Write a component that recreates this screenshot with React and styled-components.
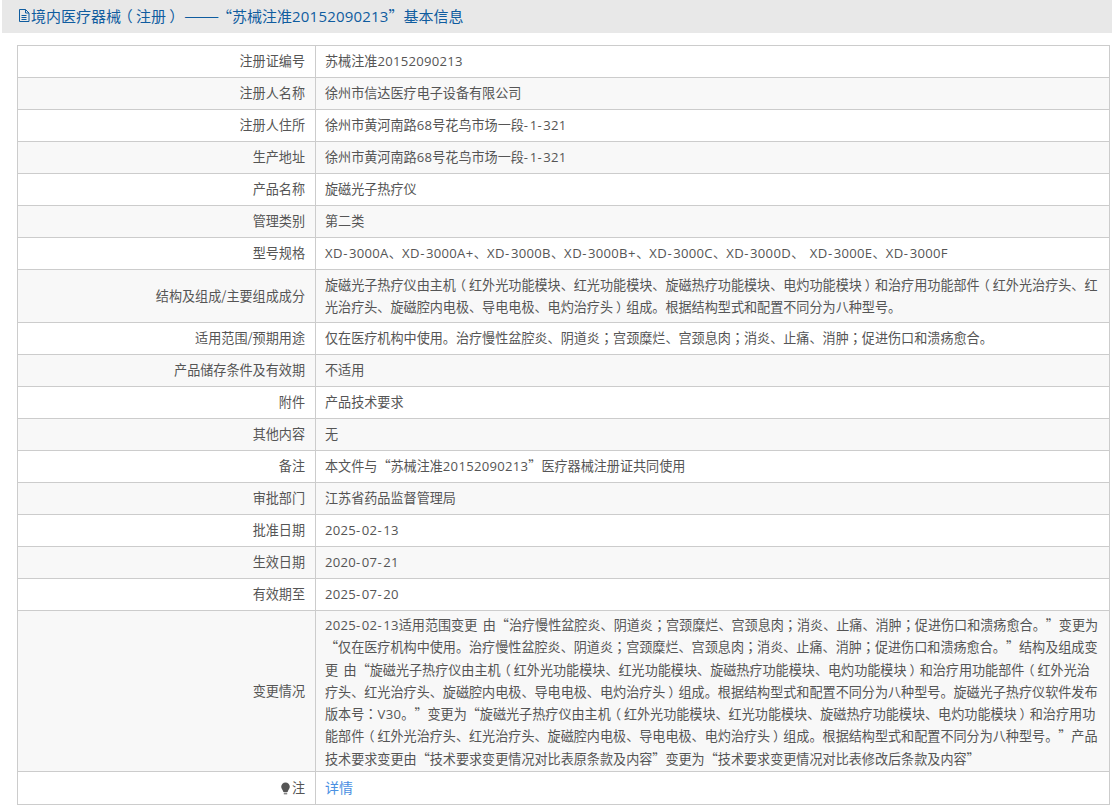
import React from "react";
import styled, { createGlobalStyle } from "styled-components";

const Global = createGlobalStyle`
  html, body { margin: 0; padding: 0; background: #fff; }
  body { font-family: "Noto Sans CJK SC", sans-serif; font-size: 13.1px; color: #555; }
`;

const Page = styled.div`
  width: 1112px;
  height: 812px;
  overflow: hidden;
  background: #fff;
`;

const Latin = styled.span`
  font-family: "Open Sans", sans-serif;
  letter-spacing: ${(p) => (p.$kind === "digit" ? "0.28px" : p.$kind === "letter" ? "0.55px" : "1.55px")};
`;

const Centered = styled.span`
  font-family: "Noto Sans CJK TC", sans-serif;
`;

const Paren = styled.span`
  display: inline-block;
  width: 1em;
  transform: translateX(${(p) => (p.$open ? "-0.22em" : "0.22em")});
`;

const Quote = styled.span`
  display: inline-block;
  width: 1em;
  text-align: ${(p) => (p.$open ? "right" : "left")};
`;

const Header = styled.h3`
  margin: 0 0 0 2px;
  box-sizing: border-box;
  height: 33px;
  padding: 0 0 2px 15px;
  background: #e8e8e8;
  color: #0f5c9f;
  font-size: 15px;
  font-weight: 400;
  line-height: 31px;
  display: flex;
  align-items: center;
  ${Latin} { letter-spacing: 0.2px; }
`;

const HeaderText = styled.span`
  display: block;
`;

const Dash = styled.span`
  display: inline-block;
  width: 33px;
  margin-left: 3px;
  white-space: nowrap;
  transform-origin: left center;
  transform: scaleX(1.4);
`;

const DocIcon = styled.svg`
  width: 14px;
  height: 15px;
  flex: none;
`;

const Table = styled.table`
  border-collapse: collapse;
  table-layout: fixed;
  width: 1093px;
  margin: 12px 0 0 17px;
`;

const Row = styled.tr`
  background: ${(p) => (p.$odd ? "#f8f8f8" : "#fff")};
`;

const Label = styled.td`
  width: 298px;
  box-sizing: border-box;
  border: 1px solid #ccc;
  padding: 4px 10px 5px 9px;
  text-align: right;
  line-height: 22px;
`;

const Value = styled.td`
  border: 1px solid #ccc;
  padding: ${(p) => (p.$double ? "4px 8px 4px 9px" : "4px 8px 5px 9px")};
  line-height: 22px;
  word-spacing: 2.5px;
`;

const MultiValue = styled(Value)`
  padding: 3px 8px 1px 9px;
  line-height: 22.3px;
`;

const Link = styled.a`
  color: #4a90e2;
  text-decoration: none;
  font-size: 14px;
`;

const BulbIcon = styled.svg`
  width: 11px;
  height: 13px;
  vertical-align: -2px;
  margin-right: 1px;
`;

const Rich = ({ text }) =>
  text.split(/([0-9]+|[A-Za-z+]+|-|[（）]|[；：]|[“”])/).map((part, i) => {
    if (!part) return null;
    if (/^[0-9]+$/.test(part)) return <Latin key={i} $kind="digit">{part}</Latin>;
    if (/^[A-Za-z+]+$/.test(part)) return <Latin key={i} $kind="letter">{part}</Latin>;
    if (part === "-") return <Latin key={i} $kind="hyphen">{part}</Latin>;
    if (part === "（" || part === "）") return <Paren key={i} $open={part === "（"}>{part}</Paren>;
    if (part === "；" || part === "：") return <Centered key={i}>{part}</Centered>;
    if (part === "“" || part === "”") return <Quote key={i} $open={part === "“"}>{part}</Quote>;
    return part;
  });

const rows = [
  ["注册证编号", "苏械注准20152090213"],
  ["注册人名称", "徐州市信达医疗电子设备有限公司"],
  ["注册人住所", "徐州市黄河南路68号花鸟市场一段-1-321"],
  ["生产地址", "徐州市黄河南路68号花鸟市场一段-1-321"],
  ["产品名称", "旋磁光子热疗仪"],
  ["管理类别", "第二类"],
  ["型号规格", "XD-3000A、XD-3000A+、XD-3000B、XD-3000B+、XD-3000C、XD-3000D、 XD-3000E、XD-3000F"],
  ["结构及组成/主要组成成分", "旋磁光子热疗仪由主机（红外光功能模块、红光功能模块、旋磁热疗功能模块、电灼功能模块）和治疗用功能部件（红外光治疗头、红光治疗头、旋磁腔内电极、导电电极、电灼治疗头）组成。根据结构型式和配置不同分为八种型号。", true],
  ["适用范围/预期用途", "仅在医疗机构中使用。治疗慢性盆腔炎、阴道炎；宫颈糜烂、宫颈息肉；消炎、止痛、消肿；促进伤口和溃疡愈合。"],
  ["产品储存条件及有效期", "不适用"],
  ["附件", "产品技术要求"],
  ["其他内容", "无"],
  ["备注", "本文件与“苏械注准20152090213”医疗器械注册证共同使用"],
  ["审批部门", "江苏省药品监督管理局"],
  ["批准日期", "2025-02-13"],
  ["生效日期", "2020-07-21"],
  ["有效期至", "2025-07-20"],
];

const changes = "2025-02-13适用范围变更 由“治疗慢性盆腔炎、阴道炎；宫颈糜烂、宫颈息肉；消炎、止痛、消肿；促进伤口和溃疡愈合。”变更为“仅在医疗机构中使用。治疗慢性盆腔炎、阴道炎；宫颈糜烂、宫颈息肉；消炎、止痛、消肿；促进伤口和溃疡愈合。”结构及组成变更 由“旋磁光子热疗仪由主机（红外光功能模块、红光功能模块、旋磁热疗功能模块、电灼功能模块）和治疗用功能部件（红外光治疗头、红光治疗头、旋磁腔内电极、导电电极、电灼治疗头）组成。根据结构型式和配置不同分为八种型号。旋磁光子热疗仪软件发布版本号：V30。”变更为“旋磁光子热疗仪由主机（红外光功能模块、红光功能模块、旋磁热疗功能模块、电灼功能模块）和治疗用功能部件（红外光治疗头、红光治疗头、旋磁腔内电极、导电电极、电灼治疗头）组成。根据结构型式和配置不同分为八种型号。”产品技术要求变更由“技术要求变更情况对比表原条款及内容”变更为“技术要求变更情况对比表修改后条款及内容”";

export default function App() {
  return (
    <Page>
      <Global />
      <Header>
        <DocIcon viewBox="0 0 14 15" fill="none" stroke="#0f5c9f" strokeWidth="1">
          <path d="M2.5 1.5h6l3.5 3.5v8.5h-9.5z M8.5 1.5v3.5h3.5 M4.5 7.5h5 M4.5 9.5h5 M4.5 11.5h5" />
        </DocIcon>
        <HeaderText>
          <Rich text="境内医疗器械（注册）" />
          <Dash>——</Dash>
          <Rich text="“苏械注准20152090213”基本信息" />
        </HeaderText>
      </Header>
      <Table>
        <tbody>
          {rows.map(([k, v, double], i) => (
            <Row key={k} $odd={i % 2 === 1}>
              <Label>{k}</Label>
              <Value $double={double}><Rich text={v} /></Value>
            </Row>
          ))}
          <Row $odd>
            <Label>变更情况</Label>
            <MultiValue><Rich text={changes} /></MultiValue>
          </Row>
          <Row>
            <Label>
              <BulbIcon viewBox="0 0 11 13">
                <path fill="#555" d="M5.5 0.5a4.3 4.3 0 0 1 4.3 4.3c0 2-1.6 3-2.2 5.2H3.4C2.8 7.8 1.2 6.8 1.2 4.8A4.3 4.3 0 0 1 5.5 0.5z" />
                <rect x="3.8" y="10.6" width="3.4" height="1.8" fill="#888" />
              </BulbIcon>
              注
            </Label>
            <Value><Link href="#">详情</Link></Value>
          </Row>
        </tbody>
      </Table>
    </Page>
  );
}
